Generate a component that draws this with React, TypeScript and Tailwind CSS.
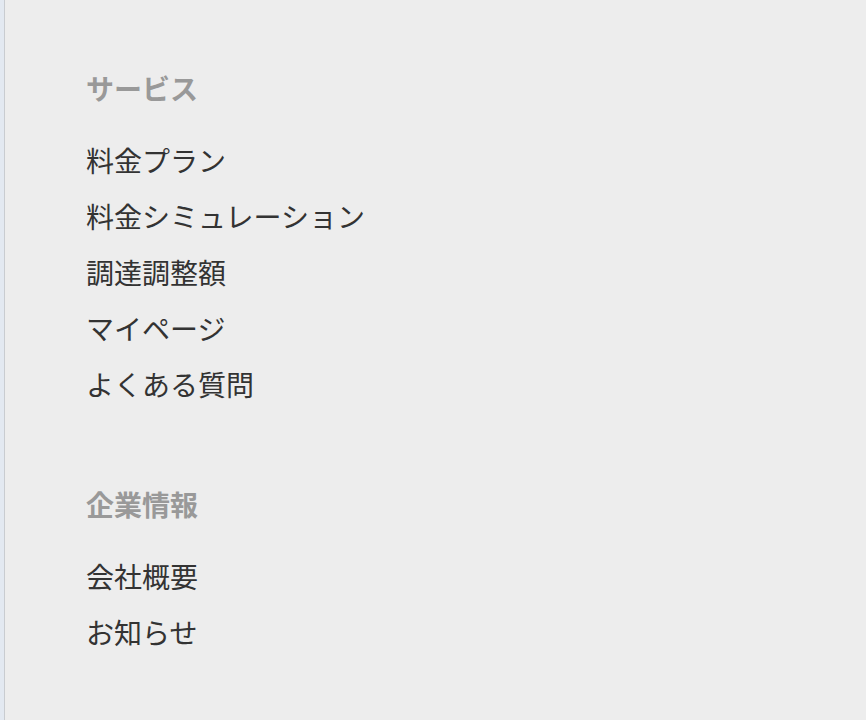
const SECTIONS = [
  {
    title: "サービス",
    items: ["料金プラン", "料金シミュレーション", "調達調整額", "マイページ", "よくある質問"],
  },
  {
    title: "企業情報",
    items: ["会社概要", "お知らせ"],
  },
];

export default function App() {
  return (
    <div
      className="flex min-h-[720px] bg-[#ededed] text-[#333]"
      style={{ fontFamily: '"Noto Sans CJK JP", "Noto Sans", sans-serif' }}
    >
      {/* left edge strip */}
      <div className="w-[4px] shrink-0 bg-[#e3e9f1]" />
      <div className="w-[1px] shrink-0 bg-[#c9ccd0]" />

      <nav className="flex flex-col gap-16 pl-[81px] pt-[60px]">
        {SECTIONS.map((s) => (
          <div key={s.title} className="flex flex-col gap-4">
            <h3 className="h-14 leading-[56px] text-[28px] font-bold text-[#999]">
              {s.title}
            </h3>
            <ul className="flex flex-col">
              {s.items.map((item) => (
                <li key={item} className="h-14 leading-[56px] text-[28px]">
                  {item}
                </li>
              ))}
            </ul>
          </div>
        ))}
      </nav>
    </div>
  );
}
